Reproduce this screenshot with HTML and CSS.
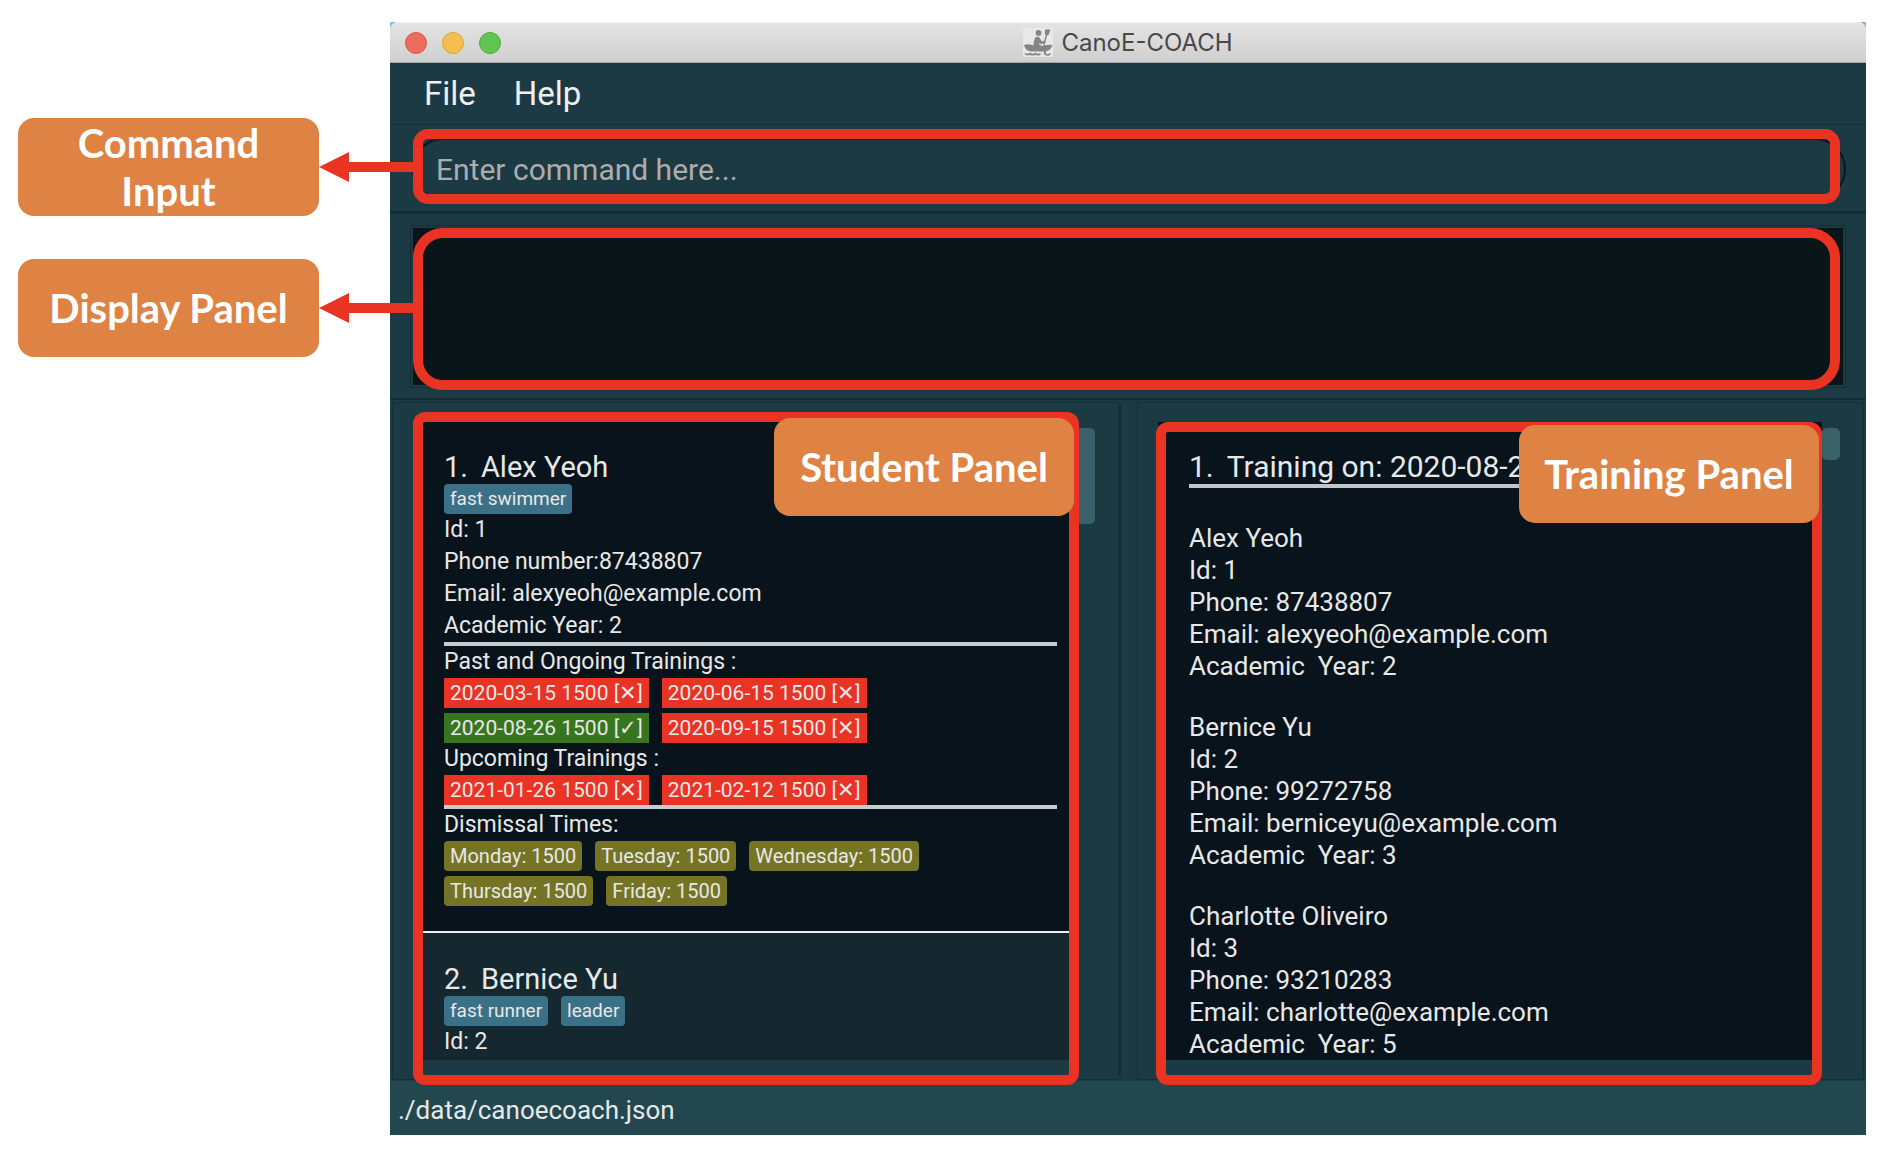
FILE: index.html
```html
<!DOCTYPE html>
<html lang="en">
<head>
<meta charset="utf-8">
<title>CanoE-COACH</title>
<link rel="stylesheet" href="styles.css">
</head>
<body>
<div class="page">
  <aside class="notes">
    <div class="tag note">Command<br>Input
      <svg class="arrow" viewBox="0 0 94 30" aria-hidden="true"><path d="M0 15 30 0V10H94V20H30V30Z"/></svg>
    </div>
    <div class="tag note">Display Panel
      <svg class="arrow" viewBox="0 0 94 30" aria-hidden="true"><path d="M0 15 30 0V10H94V20H30V30Z"/></svg>
    </div>
  </aside>

  <main class="window">
    <header class="titlebar">
      <div class="lights"><span class="light close"></span><span class="light minimise"></span><span class="light zoom"></span></div>
      <h1 class="title">
        <svg class="logo" viewBox="0 0 30 29" aria-hidden="true">
          <rect width="30" height="29" fill="#e9e9e9"/>
          <g fill="#858585">
            <circle cx="15.500" cy="5" r="2.900"/>
            <path d="M12.500 9.300q2-1.200 4 .2l2.300 4 3-1 .7 2-4.700 1.800-1.300-1.800v2.500l4.500 1.500-.5 1.500H11q-1.500-5 1.500-10.700z"/>
            <path d="M1 17q4-1.500 8 0l3 1h8q5-1.800 9.500-1-1.500 5.500-7.500 6.500H8Q2 22.500 1 17z"/>
            <path d="M22 1.500h5.500L25.500 7l-1.500.5-3 12-1.300-.4 3-12-.8-1.100z"/>
          </g>
          <path d="M2 25.500q2 2.200 5 .2 2.500 2 5.500 0 2.500 1.800 5 0M21 20q2 3 .5 5.500 2 2.500 6 .5" fill="none" stroke="#858585" stroke-width="1.800"/>
        </svg>
        CanoE-COACH
      </h1>
    </header>

    <nav class="menu">
      <button type="button">File</button>
      <button type="button">Help</button>
    </nav>

    <form class="command">
      <input class="command-input" type="text" aria-label="Command" placeholder="Enter command here...">
      <span class="frame frame-command"></span>
    </form>

    <section class="result" aria-label="Display panel">
      <div class="result-edge"><div class="result-box"><span class="frame frame-result"></span></div></div>
    </section>

    <div class="split">
      <section class="pane pane-students" aria-label="Students">
        <div class="list">
          <article class="student">
            <h2 class="name"><span>1.</span><span>Alex Yeoh</span></h2>
            <div class="chips"><span class="chip skill">fast swimmer</span></div>
            <div class="facts">
              <p>Id: 1</p>
              <p>Phone number:87438807</p>
              <p>Email: alexyeoh@example.com</p>
              <p>Academic Year: 2</p>
            </div>
            <hr class="rule">
            <h3 class="heading">Past and Ongoing Trainings :</h3>
            <div class="chips">
              <span class="chip missed">2020-03-15 1500 [✕]</span>
              <span class="chip missed">2020-06-15 1500 [✕]</span>
            </div>
            <div class="chips next">
              <span class="chip attended">2020-08-26 1500 [✓]</span>
              <span class="chip missed">2020-09-15 1500 [✕]</span>
            </div>
            <h3 class="heading">Upcoming Trainings :</h3>
            <div class="chips">
              <span class="chip missed">2021-01-26 1500 [✕]</span>
              <span class="chip missed">2021-02-12 1500 [✕]</span>
            </div>
            <hr class="rule">
            <h3 class="heading">Dismissal Times:</h3>
            <div class="chips">
              <span class="chip time">Monday: 1500</span>
              <span class="chip time">Tuesday: 1500</span>
              <span class="chip time">Wednesday: 1500</span>
            </div>
            <div class="chips next">
              <span class="chip time">Thursday: 1500</span>
              <span class="chip time">Friday: 1500</span>
            </div>
          </article>
          <article class="student alternate">
            <h2 class="name"><span>2.</span><span>Bernice Yu</span></h2>
            <div class="chips"><span class="chip skill">fast runner</span><span class="chip skill">leader</span></div>
            <div class="facts"><p>Id: 2</p></div>
          </article>
          <span class="frame frame-students"></span>
          <span class="tag tag-students">Student Panel</span>
        </div>
        <div class="scroll"><span class="thumb thumb-long"></span></div>
      </section>

      <div class="divider"></div>

      <section class="pane pane-trainings" aria-label="Trainings">
        <div class="list">
          <article class="training">
            <h2 class="name name-ruled"><span>1.</span><span>Training on: 2020-08-26</span></h2>
            <div class="member">
              <p>Alex Yeoh</p>
              <p>Id: 1</p>
              <p>Phone: 87438807</p>
              <p>Email: alexyeoh@example.com</p>
              <p>Academic&nbsp; Year: 2</p>
            </div>
            <div class="member">
              <p>Bernice Yu</p>
              <p>Id: 2</p>
              <p>Phone: 99272758</p>
              <p>Email: berniceyu@example.com</p>
              <p>Academic&nbsp; Year: 3</p>
            </div>
            <div class="member">
              <p>Charlotte Oliveiro</p>
              <p>Id: 3</p>
              <p>Phone: 93210283</p>
              <p>Email: charlotte@example.com</p>
              <p>Academic&nbsp; Year: 5</p>
            </div>
          </article>
          <span class="frame frame-trainings"></span>
          <span class="tag tag-trainings">Training Panel</span>
        </div>
        <div class="scroll"><span class="thumb thumb-short"></span></div>
      </section>
    </div>

    <footer class="status">./data/canoecoach.json</footer>
  </main>
</div>
</body>
</html>
```

FILE: styles.css
```css
* { box-sizing: border-box; }

body {
  margin: 0;
  background: #fff;
  color: #e8e8e8;
  font-family: Roboto, "Liberation Sans", sans-serif;
}

h1, h2, h3, p { margin: 0; font-weight: 400; }

.page {
  display: flex;
  padding: 22px 24px 24px 18px;
}

/* Callouts */
.notes {
  flex: none;
  display: flex;
  flex-direction: column;
  gap: 43px;
  width: 372px;
  padding: 96px 71px 0 0;
}

.tag {
  display: flex;
  align-items: center;
  justify-content: center;
  height: 98px;
  border-radius: 16px;
  background: #de8344;
  color: #fff;
  font: 700 40px/48px Lato, sans-serif;
  text-align: center;
  white-space: nowrap;
}

.note { position: relative; z-index: 2; }

.arrow {
  position: absolute;
  left: 100%;
  top: 34px;
  width: 94px;
  height: 30px;
  fill: #e93323;
}

.frame {
  position: absolute;
  border: 10px solid #e93323;
  border-radius: 12px;
  pointer-events: none;
}

/* Window */
.window {
  flex: 1;
  min-width: 0;
  background: linear-gradient(90deg, #8cb9d6, #a9a5b8) top / 100% 20px no-repeat, #1c3a43;
}

.titlebar {
  display: grid;
  grid-template-columns: 1fr auto 1fr;
  align-items: center;
  height: 41px;
  padding: 0 15px;
  border-top: 1px solid #f4f4f4;
  border-bottom: 1px solid #a5a5a5;
  border-radius: 8px 8px 0 0;
  background: linear-gradient(#e4e4e4, #cfcfcf);
}

.lights { display: flex; gap: 15px; }

.light {
  width: 22px;
  height: 22px;
  border: 1px solid #dc5247;
  border-radius: 50%;
  background: #ed6a5f;
}
.minimise { border-color: #dba53a; background: #f5bf4f; }
.zoom { border-color: #4daa3e; background: #61c554; }

.title {
  display: flex;
  align-items: center;
  gap: 8px;
  color: #484848;
  font: 400 24px/30px Inter, sans-serif;
}

.logo { width: 30px; height: 29px; }

.menu {
  display: flex;
  gap: 38px;
  height: 62px;
  padding: 0 34px;
  border-bottom: 1px solid #142e35;
}

.menu button {
  padding: 0;
  border: 0;
  background: none;
  color: #f0f0f0;
  font: 400 33px/40px Roboto, sans-serif;
}

.command {
  position: relative;
  height: 89px;
  padding: 13px 20px 11px 22px;
  border-bottom: 3px solid #142e35;
}

.command-input {
  display: block;
  width: 100%;
  height: 62px;
  padding: 0 22px;
  border: 2px solid #0b171c;
  border-radius: 31px;
  outline: 0;
  background: transparent;
  color: #fff;
  font: 400 30px/40px Roboto, sans-serif;
}
.command-input::placeholder { color: #adadad; opacity: 1; }

.frame-command { inset: 4px 26px 7px 23px; border-radius: 15px; }

.result {
  padding: 11px 20px 10px;
  border-bottom: 2px solid #142e35;
}

.result-edge {
  padding: 2px;
  border: 1px solid #142e35;
}

.result-box {
  position: relative;
  height: 157px;
  background: #0a151a;
}

.frame-result { inset: 0 3px -5px 0; border-radius: 30px; }

/* Lists */
.split {
  display: grid;
  grid-template-columns: 1fr 18px 1fr;
  padding: 2px 2px 1px;
}

.pane {
  display: grid;
  grid-template-columns: 1fr 18px;
  padding: 19px 23px 19px 20px;
  border: 1px solid #142e35;
}

.divider {
  border-left: 2px solid #142e35;
  border-radius: 6px 0 0 6px;
}

.list {
  position: relative;
  background: #08131c;
}

.frame-students { inset: -10px -2px -25px 0; }
.frame-trainings { inset: 0 0 -25px -2px; }

.tag-students, .tag-trainings { position: absolute; width: 300px; }
.tag-students { top: -4px; right: 3px; }
.tag-trainings { top: 3px; right: 3px; }

.scroll { padding-top: 6px; }

.thumb {
  display: block;
  border-radius: 5px;
  background: #3a606a;
}
.thumb-long { height: 96px; }
.thumb-short { height: 32px; }

.student { padding: 28px 20px 25px 31px; }
.alternate {
  margin: 0 8px 0 10px;
  padding: 29px 10px 2px 21px;
  border-top: 2px solid #f0f0f0;
  background: #15282f;
}

.name {
  display: flex;
  gap: 13px;
  font-size: 29px;
  line-height: 34px;
}

.chips { display: flex; gap: 13px; }
.next { margin-top: 5px; }

.chip {
  padding: 0 6px;
  font-size: 21px;
  line-height: 30px;
  white-space: nowrap;
}
.skill { border-radius: 4px; background: #3b7186; font-size: 19px; }
.missed { background: #e83325; }
.attended { background: #37761f; }
.time { border-radius: 4px; background: #747424; font-size: 20px; }

.facts {
  font-size: 23px;
  line-height: 32px;
}

.rule {
  height: 4px;
  margin: 0;
  border: 0;
  background: #c8cccc;
}

.heading {
  font-size: 23px;
  line-height: 32px;
}

.training { padding: 28px 20px 0 31px; }

.name-ruled {
  margin-bottom: 34px;
  border-bottom: 4px solid #c4c4ca;
  font-size: 30px;
}

.member {
  font-size: 26px;
  line-height: 32px;
}
.member + .member { margin-top: 29px; }

.status {
  padding: 13px 8px 9px;
  background: #22474f;
  font-size: 26px;
  line-height: 32px;
}
```
